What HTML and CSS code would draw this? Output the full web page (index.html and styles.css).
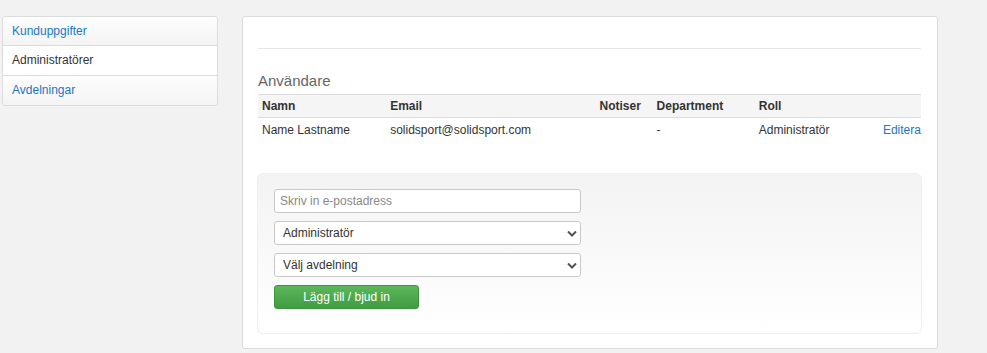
FILE: index.html
```html
<!DOCTYPE html>
<html lang="sv">
<head>
    <meta charset="UTF-8">
    <meta name="viewport" content="width=device-width, initial-scale=1.0">
    <title>Administratörer</title>
    <link rel="stylesheet" href="styles.css">
</head>
<body>
    <div class="layout">
        <ul class="side-nav">
            <li><a href="#">Kunduppgifter</a></li>
            <li class="active">Administratörer</li>
            <li><a href="#">Avdelningar</a></li>
        </ul>
        <div class="panel">
            <div class="divider"></div>
            <h2 class="section-title">Användare</h2>
            <table class="users">
                <thead>
                    <tr>
                        <th class="col-name">Namn</th>
                        <th class="col-email">Email</th>
                        <th class="col-notify">Notiser</th>
                        <th class="col-dept">Department</th>
                        <th class="col-role">Roll</th>
                        <th class="col-edit"></th>
                    </tr>
                </thead>
                <tbody>
                    <tr>
                        <td>Name Lastname</td>
                        <td>solidsport@solidsport.com</td>
                        <td></td>
                        <td>-</td>
                        <td>Administratör</td>
                        <td><a href="#">Editera</a></td>
                    </tr>
                </tbody>
            </table>
            <form class="invite">
                <input type="text" class="field" placeholder="Skriv in e-postadress">
                <div class="select-wrap">
                    <select class="field">
                        <option>Administratör</option>
                        <option>Användare</option>
                    </select>
                    <svg class="chevron" width="10" height="7" viewBox="0 0 10 7"><path d="M1 1.5 L5 5.5 L9 1.5" fill="none" stroke="#555" stroke-width="2"/></svg>
                </div>
                <div class="select-wrap">
                    <select class="field">
                        <option>Välj avdelning</option>
                    </select>
                    <svg class="chevron" width="10" height="7" viewBox="0 0 10 7"><path d="M1 1.5 L5 5.5 L9 1.5" fill="none" stroke="#555" stroke-width="2"/></svg>
                </div>
                <button type="submit" class="add-btn">Lägg till / bjud in</button>
            </form>
        </div>
    </div>
</body>
</html>
```

FILE: styles.css
```css
* {
    box-sizing: border-box;
}
body {
    font-family: 'Liberation Sans', Arial, sans-serif;
    font-size: 12px;
    color: #333;
    background-color: #f2f2f2;
    margin: 0;
    padding: 16px 0 0 2px;
}
a {
    color: #2176c7;
    text-decoration: none;
}
.layout {
    display: flex;
    align-items: flex-start;
    gap: 24px;
}
.side-nav {
    list-style: none;
    margin: 0;
    padding: 0;
    width: 216px;
    border: 1px solid #dcdcdc;
    border-radius: 3px;
    overflow: hidden;
}
.side-nav li {
    height: 30px;
    line-height: 29px;
    padding-left: 9px;
    background: linear-gradient(#fdfdfd, #f4f4f4);
    border-top: 1px solid #dcdcdc;
}
.side-nav li:first-child {
    border-top: none;
    height: 28px;
    line-height: 28px;
}
.side-nav li.active {
    background: #fff;
    color: #333;
}
.panel {
    width: 696px;
    background-color: #fff;
    border: 1px solid #dcdcdc;
    border-radius: 3px;
    padding: 15px 16px 14px 15px;
}
.divider {
    margin-top: 16px;
    border-top: 1px solid #e6e6e6;
}
.section-title {
    font-size: 15px;
    font-weight: normal;
    line-height: 20px;
    color: #666;
    margin: 22px 0 3px;
}
.users {
    width: 100%;
    border-collapse: collapse;
    table-layout: fixed;
}
.users th {
    text-align: left;
    font-weight: bold;
    background-color: #f5f5f5;
    border-top: 1px solid #dcdcdc;
    border-bottom: 1px solid #dcdcdc;
    padding: 4px 4px;
    line-height: 14px;
}
.users td {
    padding: 5px 4px;
    line-height: 14px;
}
.col-name { width: 128px; }
.col-email { width: 209px; }
.col-notify { width: 57px; }
.col-dept { width: 102px; }
.col-role { width: 124px; }
.col-edit { width: 42px; }
.invite {
    margin: 31px -1px 0;
    padding: 15px 16px 24px;
    border: 1px solid #efefef;
    border-radius: 6px;
    background: linear-gradient(#f3f3f3, #ffffff);
    display: flex;
    flex-direction: column;
    align-items: flex-start;
    gap: 8px;
}
.field {
    width: 307px;
    height: 24px;
    border: 1px solid #c8c8c8;
    border-radius: 3px;
    background-color: #fff;
    font-family: inherit;
    font-size: 12px;
    color: #333;
    padding: 0 8px;
    margin: 0;
}
input.field::placeholder {
    color: #888;
}
input.field {
    padding: 0 5px;
}
.select-wrap {
    position: relative;
}
select.field {
    appearance: none;
    -webkit-appearance: none;
}
.chevron {
    position: absolute;
    right: 4px;
    top: 9px;
    pointer-events: none;
}
.add-btn {
    width: 145px;
    height: 24px;
    border: 1px solid #3f9140;
    border-radius: 3px;
    background: linear-gradient(#5db75d, #3f9c3f);
    color: #fff;
    font-family: inherit;
    font-size: 12px;
    cursor: pointer;
}
```
